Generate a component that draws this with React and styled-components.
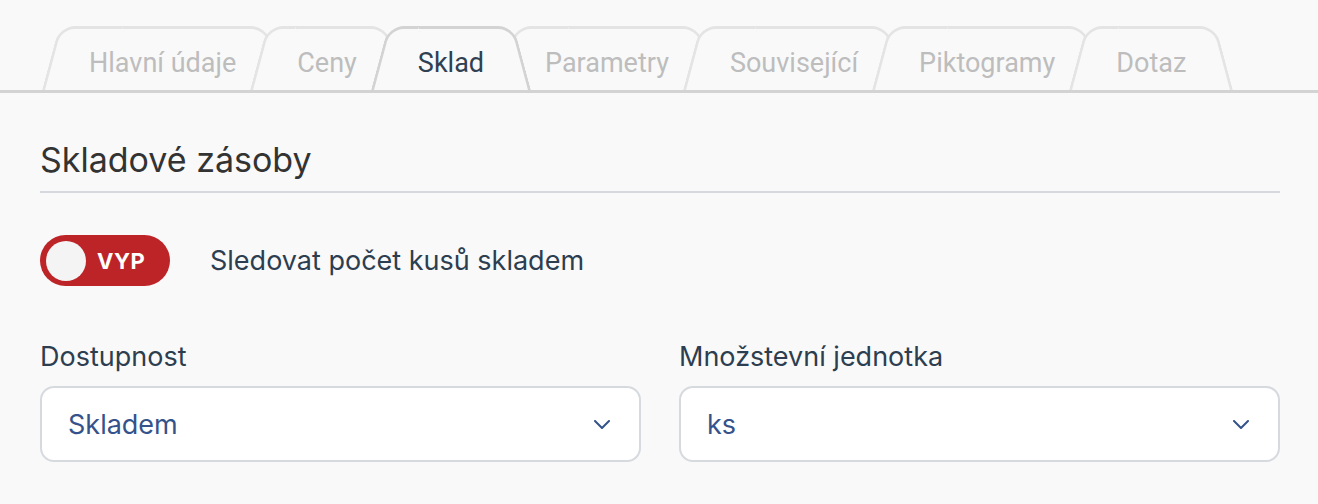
import React from "react"
import styled, { createGlobalStyle } from "styled-components"

const Global = createGlobalStyle`
    body {
        margin: 0;
        background: #f9f9f9;
        font-family: Inter, "Noto Sans", sans-serif;
    }
`

const TabStrip = styled.div`
    display: flex;
    padding: 26px 0 0 42px;
    border-bottom: 3px solid #d3d3d3;
`

const Tab = styled.div`
    position: relative;
    z-index: ${p => p.$active ? 50 : p.$index};
    height: 64px;
    padding: 9px 47px 0;
    margin-left: ${p => p.$index === 0 ? 0 : -33}px;
    margin-bottom: ${p => p.$active ? -3 : 0}px;
    box-sizing: border-box;
    display: flex;
    align-items: center;
    font-family: Roboto, sans-serif;
    font-size: 27px;
    color: ${p => p.$active ? "#2f4052" : "#bdbdbd"};
    cursor: pointer;

    &::before,
    &::after {
        content: "";
        position: absolute;
        top: 0;
        bottom: 0;
        width: 60%;
        z-index: -1;
        background: #f9f9f9;
        border: 3px solid ${p => p.$active ? "#d3d3d3" : "#e4e4e4"};
        border-bottom: none;
        box-sizing: border-box;
    }

    &::before {
        left: 0;
        border-right: none;
        border-top-left-radius: 16px;
        transform: skewX(-15deg);
        transform-origin: bottom left;
    }

    &::after {
        right: 0;
        border-left: none;
        border-top-right-radius: 16px;
        transform: skewX(15deg);
        transform-origin: bottom right;
    }
`

const Content = styled.div`
    padding: 0 38px 0 40px;
`

const Heading = styled.h2`
    margin: 47px 0 0;
    padding-bottom: 11px;
    font-size: 34px;
    line-height: 40px;
    font-weight: 400;
    color: #333;
    border-bottom: 2px solid #d5d9de;
`

const ToggleRow = styled.div`
    display: flex;
    align-items: center;
    gap: 40px;
    margin-top: 42px;
`

const Toggle = styled.div`
    width: 130px;
    height: 51px;
    border-radius: 26px;
    background: #bd2428;
    display: flex;
    align-items: center;
    padding: 0 6px;
    box-sizing: border-box;
    gap: 11px;
`

const Knob = styled.span`
    width: 40px;
    height: 40px;
    border-radius: 50%;
    background: #f4f4f4;
`

const ToggleText = styled.span`
    color: #fff;
    font-weight: 700;
    font-size: 22px;
    letter-spacing: 0.5px;
`

const Label = styled.span`
    font-size: 27px;
    line-height: 32px;
    color: #2c3e50;
`

const Fields = styled.div`
    display: grid;
    grid-template-columns: 1fr 1fr;
    gap: 38px;
    margin-top: 55px;
`

const Field = styled.div`
    display: flex;
    flex-direction: column;
    gap: 13px;
`

const Select = styled.div`
    height: 76px;
    box-sizing: border-box;
    background: #fff;
    border: 2px solid #d6dade;
    border-radius: 14px;
    display: flex;
    align-items: center;
    justify-content: space-between;
    padding: 0 29px 0 26px;
    font-size: 27px;
    color: #35528a;
`

const Chevron = () => (
    <svg width="16" height="9" viewBox="0 0 16 9" fill="none">
        <path d="M1 1 L8 8 L15 1" stroke="#35528a" strokeWidth="2" strokeLinecap="round" strokeLinejoin="round" />
    </svg>
)

const tabs = ["Hlavní údaje", "Ceny", "Sklad", "Parametry", "Související", "Piktogramy", "Dotaz"]

export default function App() {
    return (
        <>
            <Global />
            <TabStrip>
                {tabs.map((t, i) => (
                    <Tab key={t} $index={i} $active={t === "Sklad"}>{t}</Tab>
                ))}
            </TabStrip>
            <Content>
                <Heading>Skladové zásoby</Heading>
                <ToggleRow>
                    <Toggle>
                        <Knob />
                        <ToggleText>VYP</ToggleText>
                    </Toggle>
                    <Label>Sledovat počet kusů skladem</Label>
                </ToggleRow>
                <Fields>
                    <Field>
                        <Label>Dostupnost</Label>
                        <Select>Skladem<Chevron /></Select>
                    </Field>
                    <Field>
                        <Label>Množstevní jednotka</Label>
                        <Select>ks<Chevron /></Select>
                    </Field>
                </Fields>
            </Content>
        </>
    )
}
